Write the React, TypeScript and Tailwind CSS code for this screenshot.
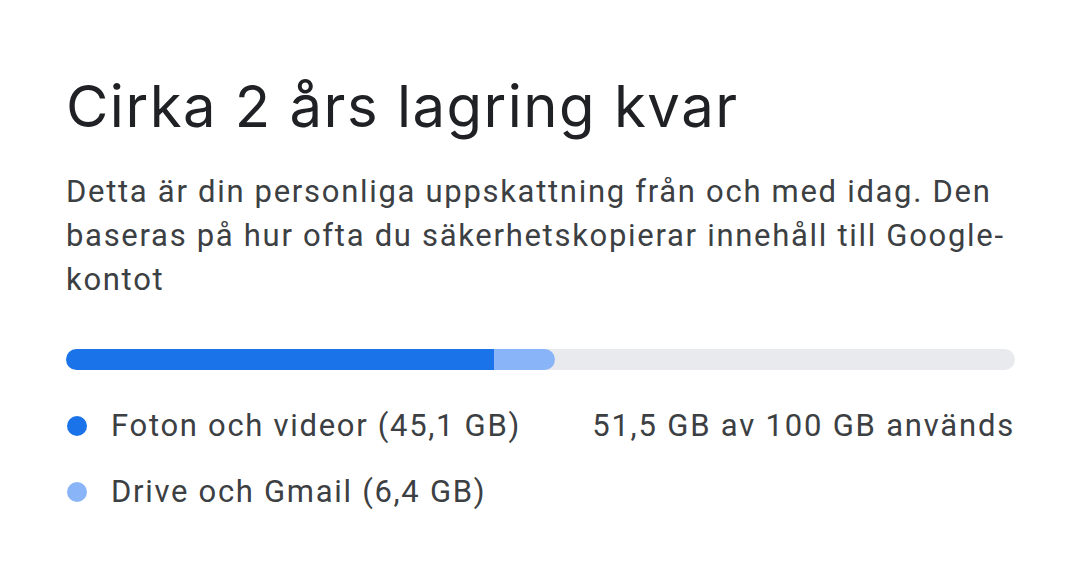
import React from 'react';

const legend = [
  { label: 'Foton och videor (45,1 GB)', color: 'bg-[#1a73e8]' },
  { label: 'Drive och Gmail (6,4 GB)', color: 'bg-[#8ab4f8]' },
];

export default function App() {
  return (
    <div className="w-[1080px] h-[584px] bg-white pl-[66px] pr-[65px] pt-[69px] font-['Roboto',sans-serif]">
      <h1 className="font-['Inter',sans-serif] text-[58px] leading-[74px] text-[#202124] tracking-[1.5px]">Cirka 2 års lagring kvar</h1>
      <p className="mt-[27px] text-[31px] leading-[44px] text-[#3c4043] tracking-[1.7px]">
        Detta är din personliga uppskattning från och med idag. Den baseras på hur ofta du säkerhetskopierar innehåll till Google-kontot
      </p>
      <div className="mt-[47px] h-[21px] w-full rounded-full bg-[#e8eaed] flex overflow-hidden">
        <div className="h-full w-[428px] bg-[#1a73e8]" />
        <div className="h-full w-[61px] bg-[#8ab4f8] rounded-r-full" />
      </div>
      <div className="mt-[34px] flex justify-between">
        <div className="flex flex-col gap-[22px]">
          {legend.map(item => (
            <div key={item.label} className="flex items-center h-[44px]">
              <span className={`w-[20px] h-[20px] rounded-full ${item.color} ml-[1px] mr-[24px]`} />
              <span className="text-[31px] text-[#3c4043] tracking-[1.7px]">{item.label}</span>
            </div>
          ))}
        </div>
        <div className="h-[44px] flex items-center text-[31px] text-[#3c4043] tracking-[1.8px]">51,5 GB av 100 GB används</div>
      </div>
    </div>
  );
}
